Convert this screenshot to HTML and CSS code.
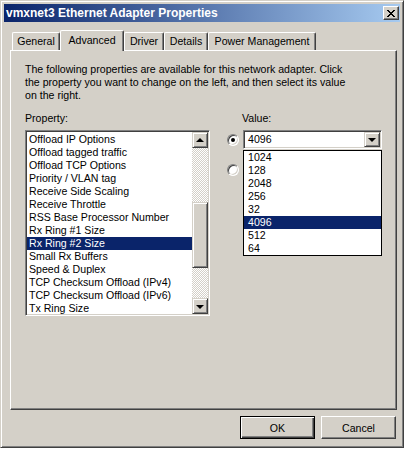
FILE: index.html
```html
<!DOCTYPE html>
<html>
<head>
<meta charset="utf-8">
<title>vmxnet3 Ethernet Adapter Properties</title>
<link rel="stylesheet" href="styles.css">
</head>
<body>
<div class="window">
  <div class="titlebar">
    <span class="title">vmxnet3 Ethernet Adapter Properties</span>
    <div class="close">
      <svg width="8" height="7" viewBox="0 0 8 7" shape-rendering="crispEdges">
        <path d="M0 0h2v1h-2zM6 0h2v1h-2zM1 1h2v1h-2zM5 1h2v1h-2zM2 2h4v1h-4zM3 3h2v1h-2zM2 4h4v1h-4zM1 5h2v1h-2zM5 5h2v1h-2zM0 6h2v1h-2zM6 6h2v1h-2z" fill="#000"/>
      </svg>
    </div>
  </div>

  <div class="tabs">
    <div class="tab t-general">General</div>
    <div class="tab t-adv selected">Advanced</div>
    <div class="tab t-driver">Driver</div>
    <div class="tab t-details">Details</div>
    <div class="tab t-power">Power Management</div>
  </div>

  <div class="panel">
    <p class="desc">
      <span class="line">The following properties are available for this network adapter. Click</span>
      <span class="line">the property you want to change on the left, and then select its value</span>
      <span class="line">on the right.</span>
    </p>
    <div class="cols">
      <div class="prop-col">
        <div class="label">Property:</div>
        <div class="listbox">
          <ul class="items">
            <li>Offload IP Options</li>
            <li>Offload tagged traffic</li>
            <li>Offload TCP Options</li>
            <li>Priority / VLAN tag</li>
            <li>Receive Side Scaling</li>
            <li>Receive Throttle</li>
            <li>RSS Base Processor Number</li>
            <li>Rx Ring #1 Size</li>
            <li class="sel">Rx Ring #2 Size</li>
            <li>Small Rx Buffers</li>
            <li>Speed &amp; Duplex</li>
            <li>TCP Checksum Offload (IPv4)</li>
            <li>TCP Checksum Offload (IPv6)</li>
            <li>Tx Ring Size</li>
          </ul>
          <div class="scrollbar">
            <div class="sbtn"><span class="arrow up"></span></div>
            <div class="track t1"></div>
            <div class="thumb"></div>
            <div class="track t2"></div>
            <div class="sbtn"><span class="arrow down"></span></div>
          </div>
        </div>
      </div>
      <div class="value-col">
        <div class="label value-label">Value:</div>
        <div class="row r1">
          <span class="radio checked"></span>
          <div class="combo">
            <span class="combo-text">4096</span>
            <div class="combo-btn"><span class="arrow down"></span></div>
            <ul class="dropdown">
              <li>1024</li>
              <li>128</li>
              <li>2048</li>
              <li>256</li>
              <li>32</li>
              <li class="sel">4096</li>
              <li>512</li>
              <li>64</li>
            </ul>
          </div>
        </div>
        <div class="row r2">
          <span class="radio"></span>
        </div>
      </div>
    </div>
  </div>

  <div class="buttons">
    <button class="btn default">OK</button>
    <button class="btn">Cancel</button>
  </div>
</div>
</body>
</html>
```
FILE: styles.css
```css
* { box-sizing: border-box; }
html, body { margin: 0; padding: 0; background: #fff; }
body {
  font-family: "Liberation Sans", Arial, sans-serif;
  font-size: 10.6px;
  color: #000;
}
ul { list-style: none; margin: 0; padding: 0; }

.window {
  width: 404px;
  height: 448px;
  background: #d4d0c8;
  border: 1px solid;
  border-color: #d4d0c8 #404040 #404040 #d4d0c8;
  box-shadow: inset 1px 1px #fff, inset -1px -1px #808080;
  padding: 3px;
  display: flex;
  flex-direction: column;
}

.titlebar {
  height: 18px;
  flex: none;
  background: linear-gradient(to right, #0a246a, #a6caf0);
  display: flex;
  align-items: center;
  justify-content: space-between;
  padding: 0 1px 0 2px;
}
.title {
  color: #fff;
  font-weight: bold;
  font-size: 12px;
  line-height: 18px;
  white-space: nowrap;
}
.close {
  width: 16px;
  height: 14px;
  background: #d4d0c8;
  border: 1px solid;
  border-color: #fff #404040 #404040 #fff;
  box-shadow: inset -1px -1px #808080;
  display: flex;
  align-items: center;
  justify-content: center;
  padding-right: 1px;
}
.close svg { display: block; }

.tabs {
  display: flex;
  align-items: flex-end;
  height: 20px;
  margin: 8px 0 0 8px;
  position: relative;
  z-index: 2;
  flex: none;
}
.tab {
  height: 18px;
  border: 1px solid;
  border-color: #fff #404040 transparent #fff;
  border-bottom: none;
  box-shadow: inset -1px 0 #808080;
  border-radius: 2px 2px 0 0;
  text-align: center;
  line-height: 16px;
  white-space: nowrap;
  background: #d4d0c8;
}
.tab.selected {
  height: 21px;
  margin-bottom: -1px;
  padding-top: 1px;
}
.t-general { width: 48px; }
.t-adv { width: 64px; }
.t-driver { width: 40px; }
.t-details { width: 44px; }
.t-power { width: 108px; }

.panel {
  width: 387px;
  height: 360px;
  margin-left: 6px;
  flex: none;
  border: 1px solid;
  border-color: #fff #404040 #404040 #fff;
  box-shadow: inset -1px -1px #808080;
  padding: 12px 0 0 14px;
}
.desc { margin: 0; line-height: 13px; }
.desc .line { display: block; white-space: nowrap; }

.cols { display: flex; align-items: flex-start; }
.prop-col { width: 185px; flex: none; }
.value-col { margin-left: 17px; width: 160px; }

.label { margin-top: 10px; line-height: 13px; }
.value-label { padding-left: 15px; }

.listbox {
  margin-top: 5px;
  width: 185px;
  height: 186px;
  display: flex;
  background: #fff;
  border: 1px solid;
  border-color: #808080 #fff #fff #808080;
  box-shadow: inset 1px 1px #404040, inset -1px -1px #d4d0c8;
  padding: 1px;
}
.items { flex: 1; overflow: hidden; padding-top: 1px; }
.items li { line-height: 13px; padding-left: 2px; white-space: nowrap; }
.items li.sel, .dropdown li.sel { background: #0a246a; color: #fff; }

.scrollbar {
  width: 16px;
  flex: none;
  display: flex;
  flex-direction: column;
}
.sbtn, .thumb, .combo-btn {
  background: #d4d0c8;
  border: 1px solid;
  border-color: #d4d0c8 #404040 #404040 #d4d0c8;
  box-shadow: inset 1px 1px #fff, inset -1px -1px #808080;
}
.sbtn {
  height: 16px;
  flex: none;
  display: flex;
  align-items: center;
  justify-content: center;
}
.thumb { height: 66px; flex: none; }
.track {
  background-color: #fff;
  background-image: conic-gradient(#d4d0c8 25%, #fff 0 50%, #d4d0c8 0 75%, #fff 0);
  background-size: 2px 2px;
}
.t1 { height: 54px; flex: none; }
.t2 { flex: 1; }

.arrow {
  width: 0;
  height: 0;
  border-left: 4px solid transparent;
  border-right: 4px solid transparent;
  display: block;
}
.arrow.up { border-bottom: 4px solid #000; margin-top: -1px; }
.arrow.down { border-top: 4px solid #000; margin-top: 1px; }

.row { display: flex; align-items: center; gap: 4px; }
.r1 { margin-top: 5px; }
.r2 { margin-top: 15px; }

.radio {
  width: 12px;
  height: 12px;
  flex: none;
  border-radius: 50%;
  background: #fff;
  border: 1px solid;
  border-color: #808080 #fff #fff #808080;
  box-shadow: inset 1px 1px #404040, inset -1px -1px #d4d0c8;
  display: flex;
  align-items: center;
  justify-content: center;
}
.radio.checked::after {
  content: "";
  width: 4px;
  height: 4px;
  border-radius: 50%;
  background: #000;
}

.combo {
  position: relative;
  width: 139px;
  height: 19px;
  background: #fff;
  border: 1px solid;
  border-color: #808080 #fff #fff #808080;
  box-shadow: inset 1px 1px #404040, inset -1px -1px #d4d0c8;
  padding: 1px;
  display: flex;
  align-items: center;
}
.combo-text { flex: 1; padding-left: 3px; line-height: 15px; }
.combo-btn {
  width: 16px;
  height: 15px;
  display: flex;
  align-items: center;
  justify-content: center;
}
.dropdown {
  position: absolute;
  top: 19px;
  left: -1px;
  width: 139px;
  background: #fff;
  border: 1px solid #000;
  z-index: 3;
}
.dropdown li { line-height: 13px; padding-left: 4px; }

.buttons {
  display: flex;
  justify-content: flex-end;
  gap: 6px;
  margin-top: 6px;
  padding-right: 4px;
  flex: none;
}
.btn {
  width: 75px;
  height: 23px;
  font: inherit;
  color: #000;
  background: #d4d0c8;
  padding: 0;
  border: 1px solid;
  border-color: #fff #404040 #404040 #fff;
  box-shadow: inset -1px -1px #808080;
}
.btn.default {
  border: 1px solid #000;
  box-shadow: inset 1px 1px #fff, inset -1px -1px #404040, inset -2px -2px #808080;
}
```
